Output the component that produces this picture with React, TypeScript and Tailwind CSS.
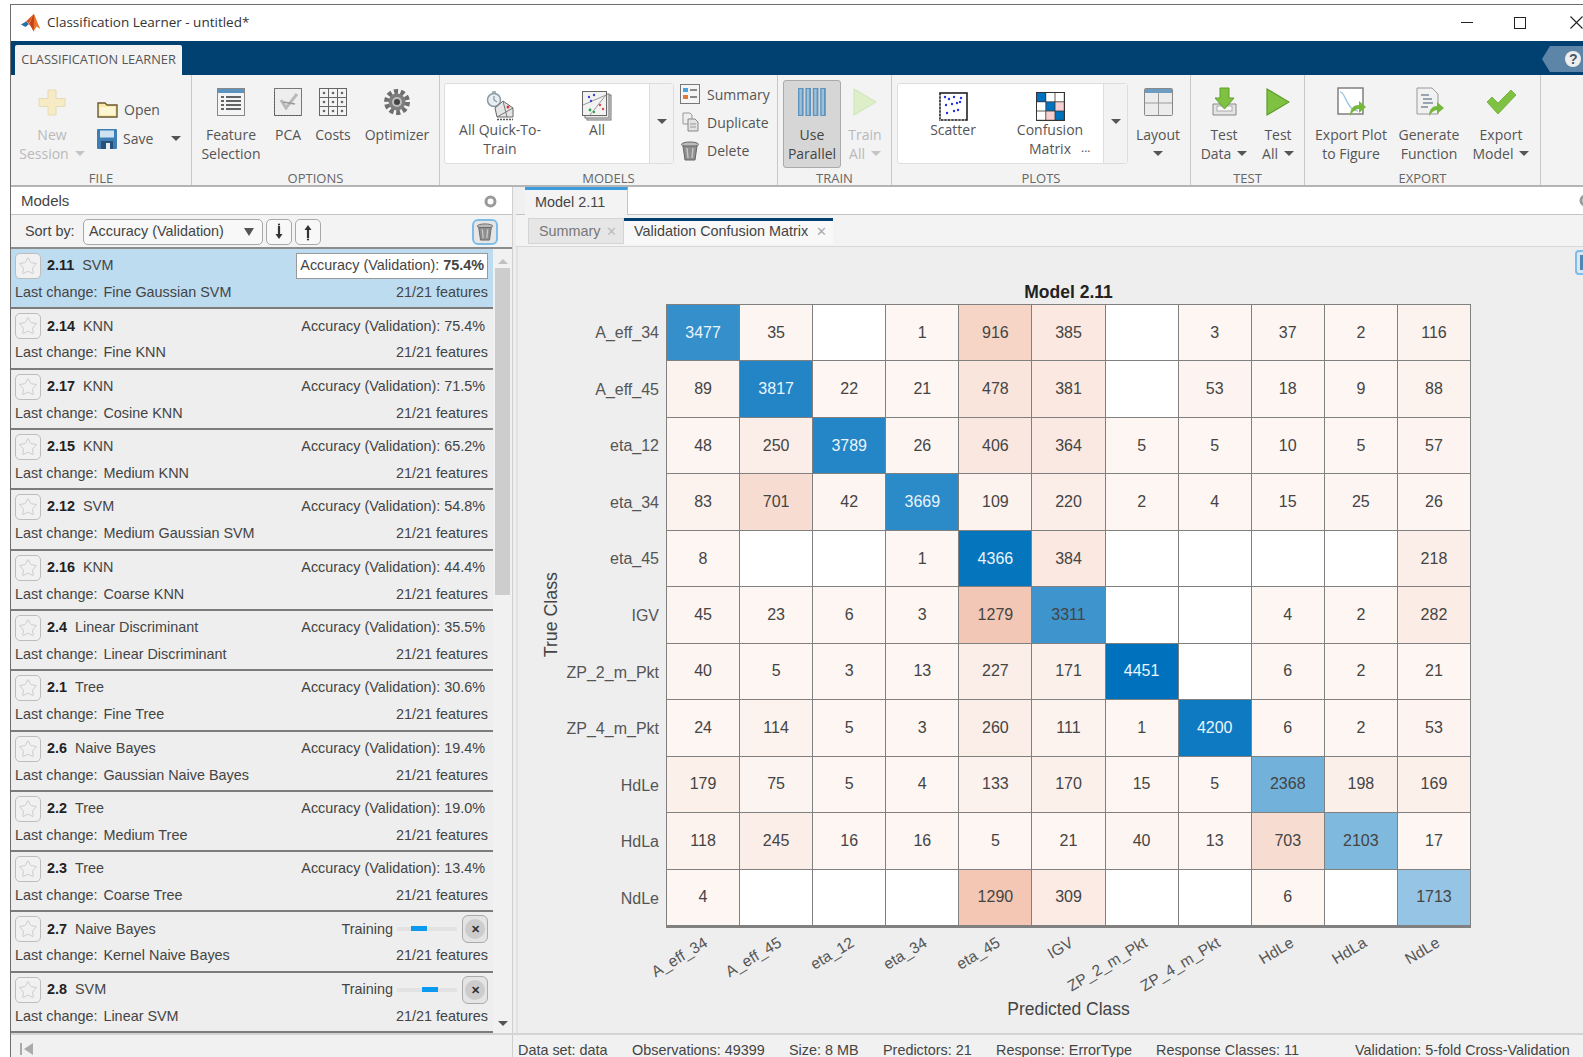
import React from "react";
import { Star } from "lucide-react";

const classes = ["A_eff_34", "A_eff_45", "eta_12", "eta_34", "eta_45", "IGV", "ZP_2_m_Pkt", "ZP_4_m_Pkt", "HdLe", "HdLa", "NdLe"];

const counts = [
  [3477, 35, 0, 1, 916, 385, 0, 3, 37, 2, 116],
  [89, 3817, 22, 21, 478, 381, 0, 53, 18, 9, 88],
  [48, 250, 3789, 26, 406, 364, 5, 5, 10, 5, 57],
  [83, 701, 42, 3669, 109, 220, 2, 4, 15, 25, 26],
  [8, 0, 0, 1, 4366, 384, 0, 0, 0, 0, 218],
  [45, 23, 6, 3, 1279, 3311, 0, 0, 4, 2, 282],
  [40, 5, 3, 13, 227, 171, 4451, 0, 6, 2, 21],
  [24, 114, 5, 3, 260, 111, 1, 4200, 6, 2, 53],
  [179, 75, 5, 4, 133, 170, 15, 5, 2368, 198, 169],
  [118, 245, 16, 16, 5, 21, 40, 13, 703, 2103, 17],
  [4, 0, 0, 0, 1290, 309, 0, 0, 6, 0, 1713],
];

const models = [
  { id: "2.11", kind: "SVM", change: "Fine Gaussian SVM", acc: "75.4%", selected: true },
  { id: "2.14", kind: "KNN", change: "Fine KNN", acc: "75.4%" },
  { id: "2.17", kind: "KNN", change: "Cosine KNN", acc: "71.5%" },
  { id: "2.15", kind: "KNN", change: "Medium KNN", acc: "65.2%" },
  { id: "2.12", kind: "SVM", change: "Medium Gaussian SVM", acc: "54.8%" },
  { id: "2.16", kind: "KNN", change: "Coarse KNN", acc: "44.4%" },
  { id: "2.4", kind: "Linear Discriminant", change: "Linear Discriminant", acc: "35.5%" },
  { id: "2.1", kind: "Tree", change: "Fine Tree", acc: "30.6%" },
  { id: "2.6", kind: "Naive Bayes", change: "Gaussian Naive Bayes", acc: "19.4%" },
  { id: "2.2", kind: "Tree", change: "Medium Tree", acc: "19.0%" },
  { id: "2.3", kind: "Tree", change: "Coarse Tree", acc: "13.4%" },
  { id: "2.7", kind: "Naive Bayes", change: "Kernel Naive Bayes", progress: 14 },
  { id: "2.8", kind: "SVM", change: "Linear SVM", progress: 25 },
];

// Blend from white toward MATLAB's blue (diagonal) or orange (off diagonal).
function cellColor(value: number, diagonal: boolean) {
  if (value === 0) return "#ffffff";
  const t = 0.05 + (value / 4451) * 0.95;
  const [r, g, b] = diagonal ? [0, 114, 189] : [217, 83, 25];
  const mix = (c: number) => Math.round(255 + (c - 255) * t);
  return `rgb(${mix(r)},${mix(g)},${mix(b)})`;
}

function Icon({ w = 30, h = 30, vb = "0 0 30 30", children }: { w?: number; h?: number; vb?: string; children: React.ReactNode }) {
  return (
    <svg width={w} height={h} viewBox={vb} className="block shrink-0">
      {children}
    </svg>
  );
}

function MatlabLogo() {
  return (
    <svg width="20" height="20" viewBox="0 0 20 20" className="block">
      <path d="M0 11.5 L5 8.5 L8 11 L4.5 14 Z" fill="#2b6ea6" />
      <path d="M5 8.5 L8 10.5 L11 4 L13 1 L9.5 4 Z" fill="#d9541a" />
      <path d="M13 1 C15 5 17 12 19.5 16 L15.5 13.5 L12.5 18.5 C11 15 9.5 12.5 8 11 C10 8 11 3 13 1 Z" fill="#e8762a" />
      <path d="M13 1 C11 3 10 8 8 11 C9.5 12.5 11 15 12.5 18.5 C13 13 13 6 13 1 Z" fill="#c8431a" />
    </svg>
  );
}

const Caret = ({ className = "", color = "#555" }: { className?: string; color?: string }) => (
  <svg width="10" height="5" viewBox="0 0 10 5" className={`inline-block ${className}`}>
    <path d="M0 0 H10 L5 5 Z" fill={color} />
  </svg>
);

function PlusIcon() {
  return (
    <Icon w={28} h={27} vb="0 0 28 27">
      <path d="M10 1 H18 V9.5 H27 V17.5 H18 V26 H10 V17.5 H1 V9.5 H10 Z" fill="#f6ebc4" stroke="#e6dcb4" />
    </Icon>
  );
}

function FolderIcon() {
  return (
    <Icon w={21} h={17} vb="0 0 21 17">
      <path d="M1 2 H8 L10 4 H20 V16 H1 Z" fill="#f9e9a8" stroke="#6a5a30" strokeWidth="1.4" />
      <path d="M3 6 H18 V14 H3 Z" fill="#fdf6d2" />
    </Icon>
  );
}

function SaveIcon() {
  return (
    <Icon w={20} h={20} vb="0 0 20 20">
      <rect width="20" height="20" rx="1" fill="#3d7fb5" />
      <rect x="3" y="1.5" width="14" height="7" fill="#cfe2f0" />
      <rect x="4" y="12" width="12" height="8" fill="#26527a" />
      <rect x="9" y="14" width="4" height="6" fill="#e4edf4" />
    </Icon>
  );
}

function FeatureIcon() {
  return (
    <Icon w={28} h={28} vb="0 0 28 28">
      <rect x="0.5" y="0.5" width="27" height="27" fill="#f2f4f6" stroke="#888" />
      <rect x="1" y="1" width="26" height="4" fill="#5d93bd" />
      <path d="M9 9 H24 M9 13 H24 M9 17 H24 M9 21 H24 M4 9 H7 M4 13 H7 M4 17 H7 M4 21 H7" stroke="#333" strokeWidth="1.6" />
    </Icon>
  );
}

function PcaIcon() {
  return (
    <Icon w={28} h={28} vb="0 0 28 28">
      <rect x="0.5" y="0.5" width="27" height="27" fill="#eee" stroke="#777" />
      <path d="M0.5 4 V27.5 H27" stroke="#555" strokeDasharray="1.5 1.5" fill="none" />
      <path d="M7 12 L12 20 L23 6" stroke="#b9b9b9" strokeWidth="3" fill="none" />
      <path d="M9 14 L21 16" stroke="#999" strokeWidth="1.4" />
    </Icon>
  );
}

function CostsIcon() {
  const cells = [0, 9, 18];
  return (
    <Icon w={28} h={28} vb="0 0 28 28">
      {cells.map((y) =>
        cells.map((x) => <rect key={`${x}-${y}`} x={x + 0.5} y={y + 0.5} width="9" height="9" fill="#f4f4f4" stroke="#666" />)
      )}
      {cells.map((y) => cells.map((x) => <circle key={`${x}:${y}`} cx={x + 5} cy={y + 5} r="1.3" fill="#666" />))}
    </Icon>
  );
}

function GearIcon() {
  return (
    <Icon w={26} h={26} vb="0 0 26 26">
      <circle cx="13" cy="13" r="10.5" fill="none" stroke="#6e6e6e" strokeWidth="5" strokeDasharray="4 2.6" />
      <circle cx="13" cy="13" r="8.5" fill="#7d7d7d" />
      <circle cx="13" cy="13" r="5" fill="#bdbdbd" />
      <circle cx="13" cy="13" r="3" fill="#444" />
    </Icon>
  );
}

function QuickIcon() {
  return (
    <Icon w={30} h={30} vb="0 0 30 30">
      <circle cx="9" cy="9" r="6.5" fill="#e8eef2" stroke="#8a9aa5" strokeWidth="1.5" />
      <path d="M9 5 V9 L12 11 M7 1 H11" stroke="#8a9aa5" strokeWidth="1.3" fill="none" />
      <path d="M10 17 L18 10 L28 17 V26 H12 Z" fill="#e5e5e5" stroke="#666" />
      <path d="M12 26 L28 17 M18 10 L22 26" stroke="#777" />
      <circle cx="23" cy="16" r="1.5" fill="#d23c3c" />
      <path d="M12 28.5 H28" stroke="#555" strokeWidth="1.4" strokeDasharray="2 1" />
    </Icon>
  );
}

function AllIcon() {
  return (
    <Icon w={30} h={30} vb="0 0 30 30">
      <rect x="5" y="4" width="24" height="25" fill="#ddd" stroke="#777" />
      <rect x="3" y="3" width="24" height="24" fill="#e8e8e8" stroke="#777" />
      <rect x="0.5" y="0.5" width="24" height="24" fill="#f2f2f2" stroke="#666" />
      <path d="M1 14 L24 4 M8 24 L24 4" stroke="#999" />
      <circle cx="7" cy="6" r="1.2" fill="#3a45d8" />
      <circle cx="12" cy="4" r="1.2" fill="#3a45d8" />
      <circle cx="9" cy="10" r="1.2" fill="#3a45d8" />
      <circle cx="18" cy="14" r="1.2" fill="#d84a4a" />
      <circle cx="21" cy="18" r="1.2" fill="#d84a4a" />
      <circle cx="8" cy="19" r="1.4" fill="#2aa84a" />
      <circle cx="12" cy="21" r="1.2" fill="#2aa84a" />
    </Icon>
  );
}

function SummaryIcon() {
  return (
    <Icon w={20} h={20} vb="0 0 20 20">
      <rect x="0.5" y="0.5" width="19" height="19" fill="#f5f5f5" stroke="#777" />
      <rect x="3" y="4" width="5" height="4" fill="#4aa3dc" />
      <rect x="3" y="11" width="5" height="4" fill="#e07838" />
      <path d="M10 6 H17 M10 13 H17" stroke="#666" strokeWidth="1.6" />
    </Icon>
  );
}

function DuplicateIcon() {
  return (
    <Icon w={20} h={20} vb="0 0 20 20">
      <path d="M3 1 H10 L12 3 V12 H3 Z" fill="#eee" stroke="#999" />
      <path d="M8 7 H15 L18 10 V19 H8 Z" fill="#e2e2e2" stroke="#888" />
      <path d="M10 12 H16 M10 15 H16" stroke="#999" />
    </Icon>
  );
}

function TrashIcon({ size = 20 }: { size?: number }) {
  return (
    <Icon w={size} h={size} vb="0 0 20 20">
      <ellipse cx="10" cy="3.5" rx="8.5" ry="2.5" fill="#bbb" stroke="#666" />
      <path d="M3 5 L5 19 H15 L17 5 Z" fill="#8f8f8f" stroke="#666" />
      <path d="M7 7 L8 17 M13 7 L12 17" stroke="#c9c9c9" strokeWidth="1.4" />
    </Icon>
  );
}

function ParallelIcon() {
  return (
    <Icon w={28} h={28} vb="0 0 28 28">
      {[0, 7.4, 14.8, 22.2].map((x) => (
        <g key={x}>
          <rect x={x} y="0" width="5.6" height="28" fill="#5d93bd" />
          <rect x={x + 1.4} y="1" width="2.4" height="26" fill="#9cc0da" />
        </g>
      ))}
    </Icon>
  );
}

function PlayIcon({ fill, stroke, w = 24 }: { fill: string; stroke: string; w?: number }) {
  return (
    <Icon w={w} h={28} vb="0 0 24 28">
      <path d="M1 1 L23 14 L1 27 Z" fill={fill} stroke={stroke} strokeWidth="1.2" />
    </Icon>
  );
}

function ScatterIcon() {
  const dots = [[6, 5], [10, 7], [15, 5], [13, 12], [18, 11], [21, 10], [7, 13], [19, 18], [8, 21], [15, 19], [22, 6]];
  return (
    <Icon w={29} h={29} vb="0 0 29 29">
      <rect x="1" y="1" width="27" height="27" fill="#fff" stroke="#222" strokeWidth="1.6" />
      <path d="M1 3 V28 H26" stroke="#fff" strokeDasharray="1.5 2" fill="none" />
      {dots.map(([x, y]) => (
        <circle key={`${x}-${y}`} cx={x} cy={y} r="1.2" fill="#2233dd" />
      ))}
    </Icon>
  );
}

function MatrixIcon() {
  const fills = ["#0072bd", "#fff", "#fff", "#fff", "#0072bd", "#f6cfd0", "#fff", "#f6cfd0", "#0072bd"];
  return (
    <Icon w={29} h={29} vb="0 0 29 29">
      <rect width="29" height="29" fill="#333" />
      {fills.map((f, i) => (
        <rect key={i} x={1 + (i % 3) * 9.2} y={1 + Math.floor(i / 3) * 9.2} width="8.4" height="8.4" fill={f} />
      ))}
    </Icon>
  );
}

function LayoutIcon() {
  return (
    <Icon w={29} h={28} vb="0 0 29 28">
      <rect x="0.5" y="0.5" width="28" height="27" rx="1" fill="#ececec" stroke="#888" />
      <rect x="1" y="1" width="27" height="4" fill="#6d9cc2" />
      <path d="M1 15 H28 M14.5 5 V27" stroke="#9a9a9a" />
    </Icon>
  );
}

function TestDataIcon() {
  return (
    <Icon w={27} h={30} vb="0 0 27 30">
      <path d="M2 17 H25 V28 H2 Z" fill="#e4e4e4" stroke="#888" />
      <rect x="6" y="19" width="15" height="5" fill="#fafafa" stroke="#aaa" />
      <path d="M9 1 H18 V11 H23 L13.5 22 L4 11 H9 Z" fill="#7fc241" stroke="#5e9e2c" />
    </Icon>
  );
}

function ExportPlotIcon() {
  return (
    <Icon w={29} h={30} vb="0 0 29 30">
      <rect x="1" y="1" width="25" height="26" fill="#fff" stroke="#777" strokeWidth="1.4" />
      <path d="M3 5 C8 4 10 24 21 24" stroke="#9cc4e4" strokeWidth="1.3" fill="none" />
      <path d="M13 29 C13 21 17 18 22 18 V14 L29 20 L22 26 V22 C19 22 16 24 13 29 Z" fill="#75b83c" />
    </Icon>
  );
}

function GenerateIcon() {
  return (
    <Icon w={29} h={30} vb="0 0 29 30">
      <path d="M2 1 H17 L23 7 V27 H2 Z" fill="#f1f1f1" stroke="#999" />
      <path d="M6 8 H14 M8 12 H17 M8 16 H18 M6 20 H13" stroke="#7b8a99" strokeWidth="1.3" />
      <path d="M14 29 C14 22 18 19 22 19 V15 L29 21 L22 27 V23 C19 23 17 25 14 29 Z" fill="#75b83c" />
    </Icon>
  );
}

function CheckIcon() {
  return (
    <Icon w={30} h={26} vb="0 0 30 26">
      <path d="M1 13 L6 8 L12 14 L25 1 L30 6 L12 25 Z" fill="#7fc241" stroke="#6aa834" strokeWidth="0.8" />
    </Icon>
  );
}

// Sort direction arrow with a short cap on the end it points away from.
function SortArrow({ up }: { up?: boolean }) {
  return (
    <svg width="12" height="18" viewBox="0 0 12 18" className={up ? "rotate-180" : ""}>
      <path d="M6 3 V12" stroke="#333" strokeWidth="2.2" />
      <path d="M2.5 11 H9.5 L6 16 Z" fill="#333" />
      <circle cx="6" cy="1.5" r="1.1" fill="#333" />
    </svg>
  );
}

function CircleGlyph() {
  return (
    <svg width="13" height="13" viewBox="0 0 13 13">
      <circle cx="6.5" cy="6.5" r="4.5" fill="#fff" stroke="#9a9a9a" strokeWidth="3" />
    </svg>
  );
}

// A large ribbon button: icon on top, up to two centred text lines below it.
function RibbonButton({
  width,
  icon,
  lines,
  disabled,
  caret,
  compact,
  caretBelow,
}: {
  width: string;
  icon: React.ReactNode;
  lines: string[];
  disabled?: boolean;
  caret?: boolean;
  compact?: boolean;
  caretBelow?: boolean;
}) {
  const tone = disabled ? "text-[#b9b9b9]" : "text-[#555555]";
  return (
    <div className={`${width} flex flex-col items-center ${compact ? "pt-[7px]" : "pt-[12px]"} text-[14px] leading-[19px] ${tone} shrink-0`}>
      <div className="h-[30px] flex items-center justify-center">{icon}</div>
      <div className={`${compact ? "-mt-[1px]" : "mt-[8px]"} text-center whitespace-nowrap`}>
        {lines.map((line, i) => (
          <div key={line} className="flex items-center justify-center gap-[6px]">
            {line}
            {caret && i === lines.length - 1 && <Caret color={disabled ? "#c4c4c4" : "#555"} />}
          </div>
        ))}
        {caretBelow && (
          <div className="h-[19px] flex items-center justify-center">
            <Caret />
          </div>
        )}
      </div>
    </div>
  );
}

function Section({ width, label, children }: { width: string; label: string; children: React.ReactNode }) {
  return (
    <div className={`${width} h-full flex flex-col border-r border-[#c9c9c9] shrink-0`}>
      <div className="flex-1 flex min-h-0">{children}</div>
      <div className="h-[20px] pt-[6px] text-center text-[13px] leading-[14px] text-[#666666]">{label}</div>
    </div>
  );
}

function Gallery({ width, dividerRight, children }: { width: string; dividerRight: string; children: React.ReactNode }) {
  return (
    <div className={`${width} mt-[8px] h-[81px] flex rounded-[3px] border border-[#dedede] bg-white shrink-0`}>
      <div className="flex-1 flex">{children}</div>
      <div className={`${dividerRight} flex items-center justify-center border-l border-[#dedede] bg-[#f3f3f3] pb-[5px]`}>
        <Caret />
      </div>
    </div>
  );
}

function SmallAction({ icon, label }: { icon: React.ReactNode; label: string }) {
  return (
    <div className="h-[29.5px] flex items-center gap-[7px] text-[14px] text-[#555555]">
      <div className="w-[20px]">{icon}</div>
      {label}
    </div>
  );
}

function Ribbon() {
  return (
    <div className="h-[112px] flex bg-[#f3f3f3] border-b-2 border-[#b4b4b4] font-['Open_Sans',sans-serif] shrink-0">
      <Section width="w-[181px]" label="FILE">
        <div className="pl-[11px]">
          <RibbonButton width="w-[60px]" icon={<PlusIcon />} lines={["New", "Session"]} disabled caret />
        </div>
        <div className="ml-[15px] pt-[20px] flex flex-col text-[14px] text-[#555555]">
          <div className="h-[29px] flex items-center gap-[6px]">
            <FolderIcon /> Open
          </div>
          <div className="h-[29px] flex items-center gap-[6px]">
            <SaveIcon /> Save <Caret className="ml-[12px]" />
          </div>
        </div>
      </Section>
      <Section width="w-[248px]" label="OPTIONS">
        <div className="pl-[4px] flex">
          <RibbonButton width="w-[70px]" icon={<FeatureIcon />} lines={["Feature", "Selection"]} />
          <RibbonButton width="w-[44px]" icon={<PcaIcon />} lines={["PCA"]} />
          <RibbonButton width="w-[46px]" icon={<CostsIcon />} lines={["Costs"]} />
          <RibbonButton width="w-[82px]" icon={<GearIcon />} lines={["Optimizer"]} />
        </div>
      </Section>
      <Section width="w-[338px]" label="MODELS">
        <div className="pl-[4px] flex">
          <Gallery width="w-[230px]" dividerRight="w-[24px]">
            <RibbonButton compact width="w-[110px]" icon={<QuickIcon />} lines={["All Quick-To-", "Train"]} />
            <RibbonButton compact width="w-[84px]" icon={<AllIcon />} lines={["All"]} />
          </Gallery>
          <div className="ml-[6px] pt-[5px] flex flex-col">
            <SmallAction icon={<SummaryIcon />} label="Summary" />
            <SmallAction icon={<DuplicateIcon />} label="Duplicate" />
            <SmallAction icon={<TrashIcon />} label="Delete" />
          </div>
        </div>
      </Section>
      <Section width="w-[114px]" label="TRAIN">
        <div className="pl-[5px] flex">
          <div className="w-[58px] h-[88px] mt-[5px] -mb-[5px] rounded-[3px] border border-[#aaaaaa] bg-[#d6d6d6] flex flex-col items-center pt-[6px] text-[14px] leading-[19px] text-[#444444]">
            <div className="h-[30px] flex items-center">
              <ParallelIcon />
            </div>
            <div className="mt-[8px] text-center">
              Use
              <br />
              Parallel
            </div>
          </div>
          <RibbonButton width="w-[48px]" icon={<PlayIcon fill="#dcefc8" stroke="#d2e6bd" />} lines={["Train", "All"]} disabled caret />
        </div>
      </Section>
      <Section width="w-[299px]" label="PLOTS">
        <div className="pl-[5px] flex">
          <Gallery width="w-[231px]" dividerRight="w-[24px]">
            <RibbonButton compact width="w-[110px]" icon={<ScatterIcon />} lines={["Scatter"]} />
            <RibbonButton compact width="w-[84px]" icon={<MatrixIcon />} lines={["Confusion", "Matrix"]} />
            <div className="pt-[55px] -ml-[11px] text-[12px] text-[#555555]">...</div>
          </Gallery>
          <RibbonButton width="w-[60px]" icon={<LayoutIcon />} lines={["Layout"]} caretBelow />
        </div>
      </Section>
      <Section width="w-[114px]" label="TEST">
        <div className="pl-[3px] flex">
          <RibbonButton width="w-[60px]" icon={<TestDataIcon />} lines={["Test", "Data"]} caret />
          <RibbonButton width="w-[48px]" icon={<PlayIcon fill="#7fc241" stroke="#5e9e2c" />} lines={["Test", "All"]} caret />
        </div>
      </Section>
      <Section width="w-[236px]" label="EXPORT">
        <div className="pl-[4px] flex">
          <RibbonButton width="w-[84px]" icon={<ExportPlotIcon />} lines={["Export Plot", "to Figure"]} />
          <RibbonButton width="w-[72px]" icon={<GenerateIcon />} lines={["Generate", "Function"]} />
          <RibbonButton width="w-[72px]" icon={<CheckIcon />} lines={["Export", "Model"]} caret />
        </div>
      </Section>
    </div>
  );
}

function ModelRow({ model }: { model: (typeof models)[number] }) {
  return (
    <div className={`flex-1 min-h-0 flex flex-col border-b-2 border-[#7c7c7c] pt-[4px] pl-[4px] pr-[5px] text-[14.4px] text-[#444444] ${model.selected ? "bg-[#bddcf0]" : "bg-[#eeeeee]"}`}>
      <div className="h-[26px] flex items-center">
        <div className="w-[26px] h-[26px] rounded-[5px] border border-[#bdbdbd] bg-[#f1f1f1] flex items-center justify-center">
          <Star size={20} strokeWidth={1} color="#c4c4c4" />
        </div>
        <span className="ml-[6px] font-bold text-[#222222]">{model.id}</span>
        <span className="ml-[8px]">{model.kind}</span>
        <div className="flex-1" />
        {model.progress !== undefined ? (
          <div className="flex items-center">
            <span>Training</span>
            <div className="ml-[4px] w-[60px] h-[4px] bg-[#e2e2e2] relative">
              <div className="absolute top-[-1px] h-[5px] w-[16px] bg-[#0a9bf0]" style={{ left: model.progress }} />
            </div>
            <div className="ml-[5px] w-[26px] h-[28px] rounded-[6px] border border-[#aaaaaa] bg-[#e4e4e4] flex items-center justify-center">
              <div className="w-[20px] h-[20px] rounded-full bg-[#cccccc] flex items-center justify-center text-[11px] font-bold text-[#333333]">
                ✕
              </div>
            </div>
          </div>
        ) : model.selected ? (
          <div className="h-[26px] border border-[#999999] bg-white px-[3px] flex items-center">
            Accuracy (Validation):&nbsp;<b>{model.acc}</b>
          </div>
        ) : (
          <span className="pr-[3px]">Accuracy (Validation):&nbsp;{model.acc}</span>
        )}
      </div>
      <div className="mt-[4px] h-[18px] leading-[18px] flex justify-between">
        <span>
          Last change:<span className="ml-[6px]">{model.change}</span>
        </span>
        <span>21/21 features</span>
      </div>
    </div>
  );
}

function ModelsPanel() {
  return (
    <div className="w-[502px] flex flex-col border-r border-[#cfcfcf] shrink-0">
      <div className="h-[28px] bg-white flex items-center justify-between pl-[10px] pr-[15px] pt-[1px] text-[15px] text-[#444444] border-b border-[#c4c4c4] shrink-0">
        Models
        <CircleGlyph />
      </div>
      <div className="h-[34px] pt-[1px] bg-[#f3f3f3] flex items-center pl-[14px] pr-[14px] text-[14.4px] text-[#444444] border-b-2 border-[#8c8c8c] shrink-0">
        <span className="w-[58px]">Sort by:</span>
        <div className="w-[180px] h-[26px] rounded-[5px] border border-[#a8a8a8] bg-[#f8f8f8] flex items-center justify-between pl-[5px] pr-[8px]">
          Accuracy (Validation)
          <svg width="10" height="8" viewBox="0 0 10 8">
            <path d="M0 0 H10 L5 8 Z" fill="#555" />
          </svg>
        </div>
        <div className="ml-[3px] w-[26px] h-[26px] rounded-[5px] border border-[#a8a8a8] bg-[#f8f8f8] flex items-center justify-center">
          <SortArrow />
        </div>
        <div className="ml-[3px] w-[26px] h-[26px] rounded-[5px] border border-[#a8a8a8] bg-[#f8f8f8] flex items-center justify-center">
          <SortArrow up />
        </div>
        <div className="flex-1" />
        <div className="w-[26px] h-[26px] rounded-[6px] border-2 border-[#7fbde8] bg-[#e6e6e6] flex items-center justify-center">
          <TrashIcon size={18} />
        </div>
      </div>
      <div className="flex-1 flex min-h-0">
        <div className="w-[482px] flex flex-col">
          {models.map((m) => (
            <ModelRow key={m.id} model={m} />
          ))}
        </div>
        <div className="flex-1 bg-[#f1f1f1] flex flex-col items-center pt-[10px] pb-[7px]">
          <Caret className="rotate-180" color="#c0c0c0" />
          <div className="w-[15px] h-[327px] mt-[4px] bg-[#cdcdcd]" />
          <div className="flex-1" />
          <Caret color="#555" />
        </div>
      </div>
    </div>
  );
}

function ConfusionChart() {
  return (
    <div className="flex pl-[23px] pt-[31px]">
      <div className="w-[20px] h-[622px] mt-[26px] flex items-center justify-center">
        <span className="[writing-mode:vertical-rl] rotate-180 whitespace-nowrap text-[17.8px] text-[#444444]">True Class</span>
      </div>
      <div className="w-[98px] mt-[27px] flex flex-col">
        {classes.map((c) => (
          <div key={c} className="h-[56.55px] flex items-center justify-end text-[16px] text-[#555555]">
            {c}
          </div>
        ))}
      </div>
      <div className="ml-[7px] w-[805px]">
        <div className="h-[26px] pt-[4px] text-center text-[17.5px] leading-[20px] font-bold text-[#222222]">Model 2.11</div>
        <div className="grid grid-cols-11 border-t border-l border-b-2 border-[#808080] h-[624px] grid-rows-11">
          {counts.flatMap((row, r) =>
            row.map((value, c) => (
              <div
                key={`${r}-${c}`}
                className={`flex items-center justify-center border-r border-b border-[#808080] text-[16px] ${value >= 3400 ? "text-[#eaf4fb]" : "text-[#444444]"}`}
                style={{ backgroundColor: cellColor(value, r === c) }}
              >
                {value > 0 ? value : ""}
              </div>
            ))
          )}
        </div>
        <div className="grid grid-cols-11 h-[60px]">
          {classes.map((c) => (
            <div key={c} className="relative">
              <span className="absolute right-[39px] top-[3px] origin-top-right -rotate-[31deg] whitespace-nowrap text-[15.5px] text-[#555555]">{c}</span>
            </div>
          ))}
        </div>
        <div className="mt-[8px] text-center text-[17.5px] text-[#444444]">Predicted Class</div>
      </div>
    </div>
  );
}

function PlotPanel() {
  return (
    <div className="flex-1 flex flex-col min-w-0">
      <div className="h-[28px] bg-white flex border-b border-[#c4c4c4] shrink-0">
        <div className="w-[9px] bg-[#f0f0f0]" />
        <div className="w-[103px] h-[28px] bg-[#f3f3f3] border-t-[3px] border-t-[#3d9be0] border-r border-r-[#c4c4c4] pl-[10px] flex items-center text-[14.4px] text-[#444444]">
          Model 2.11
        </div>
        <div className="flex-1" />
        <div className="mr-[-9px] flex items-center">
          <CircleGlyph />
        </div>
      </div>
      <div className="h-[32px] bg-[#f3f3f3] flex items-end pl-[12px] pb-[2px] text-[14.4px] border-b border-[#d8d8d8] shrink-0">
        <div className="w-[96px] h-[26px] pt-[1px] bg-[#e6e6e6] border border-[#d4d4d4] flex items-center justify-between pl-[10px] pr-[6px] text-[#777777]">
          Summary <span className="text-[#bdbdbd] text-[13px]">✕</span>
        </div>
        <div className="w-[209px] h-[26px] bg-[#f8f8f8] border-t-[3px] border-t-[#004172] flex items-center justify-between pl-[10px] pr-[6px] pb-[1px] text-[#444444]">
          Validation Confusion Matrix <span className="text-[#aaaaaa] text-[13px]">✕</span>
        </div>
      </div>
      <div className="flex-1 bg-[#eeeeee] border-l-2 border-[#e2e2e2] relative min-h-0">
        <div className="absolute right-[-8px] top-[3px] w-[16px] h-[25px] rounded-[4px] border-2 border-[#7fbde8] bg-[#dfe7ee]">
          <div className="ml-[3px] mt-[3px] w-[4px] h-[15px] bg-[#4e86b4]" />
        </div>
        <ConfusionChart />
      </div>
    </div>
  );
}

function StatusBar() {
  const items: [string, string][] = [
    ["w-[114px]", "Data set: data"],
    ["w-[157px]", "Observations: 49399"],
    ["w-[94px]", "Size: 8 MB"],
    ["w-[113px]", "Predictors: 21"],
    ["w-[160px]", "Response: ErrorType"],
    ["w-[199px]", "Response Classes: 11"],
    ["w-[228px]", "Validation: 5-fold Cross-Validation"],
  ];
  return (
    <div className="h-[24px] bg-[#f1f1f1] border-t-2 border-[#d4d4d4] flex shrink-0 text-[14.4px] leading-[31px] text-[#444444]">
      <div className="w-[502px] pl-[9px] flex items-center border-r border-[#cfcfcf]">
        <svg width="14" height="12" viewBox="0 0 14 12" className="mt-[6px]">
          <path d="M1 0 V12" stroke="#aaa" strokeWidth="2" />
          <path d="M13 0 V12 L4 6 Z" fill="#aaa" />
        </svg>
      </div>
      <div className="flex pl-[5px] whitespace-nowrap">
        {items.map(([w, text]) => (
          <span key={text} className={w}>
            {text}
          </span>
        ))}
      </div>
    </div>
  );
}

export default function App() {
  return (
    <div className="w-[1583px] h-[1057px] overflow-hidden bg-white pl-[10px] pt-[4px] font-['Liberation_Sans',sans-serif]">
      <div className="h-full flex flex-col border-l border-t border-[#6e6e6e]">
        <div className="h-[36px] flex items-center pl-[10px] pb-[1px] bg-white shrink-0 font-['Open_Sans',sans-serif] text-[13.5px] text-[#333333]">
          <MatlabLogo />
          <span className="ml-[6px]">Classification Learner - untitled*</span>
          <div className="flex-1" />
          <div className="w-[12px] h-[1px] bg-[#222222]" />
          <div className="ml-[41px] w-[12px] h-[12px] border-[1.5px] border-[#222222]" />
          <svg width="13" height="13" viewBox="0 0 13 13" className="ml-[44px]">
            <path d="M0.5 0.5 L12.5 12.5 M12.5 0.5 L0.5 12.5" stroke="#222" strokeWidth="1.1" />
          </svg>
        </div>
        <div className="h-[34px] bg-[#004172] pt-[4px] pl-[4px] flex justify-between shrink-0">
          <div className="w-[167px] h-[30px] pb-[1px] bg-[#f3f3f3] rounded-t-[2px] flex items-center justify-center font-['Open_Sans',sans-serif] text-[12.8px] text-[#555555]">
            CLASSIFICATION LEARNER
          </div>
          <div className="relative w-[41px] h-[26px] mt-[1px]">
            <svg width="41" height="26" viewBox="0 0 41 26" className="block">
              <path d="M8 0 H41 V26 H8 L0 13 Z" fill="#5d85a8" />
              <circle cx="31" cy="13" r="8" fill="#eeeeee" />
            </svg>
            <span className="absolute left-[27px] top-[4px] text-[14px] leading-[18px] font-bold text-[#45566a]">?</span>
          </div>
        </div>
        <Ribbon />
        <div className="flex-1 flex min-h-0">
          <ModelsPanel />
          <div className="w-[3px] bg-[#eeeeee] shrink-0" />
          <PlotPanel />
        </div>
        <StatusBar />
      </div>
    </div>
  );
}
